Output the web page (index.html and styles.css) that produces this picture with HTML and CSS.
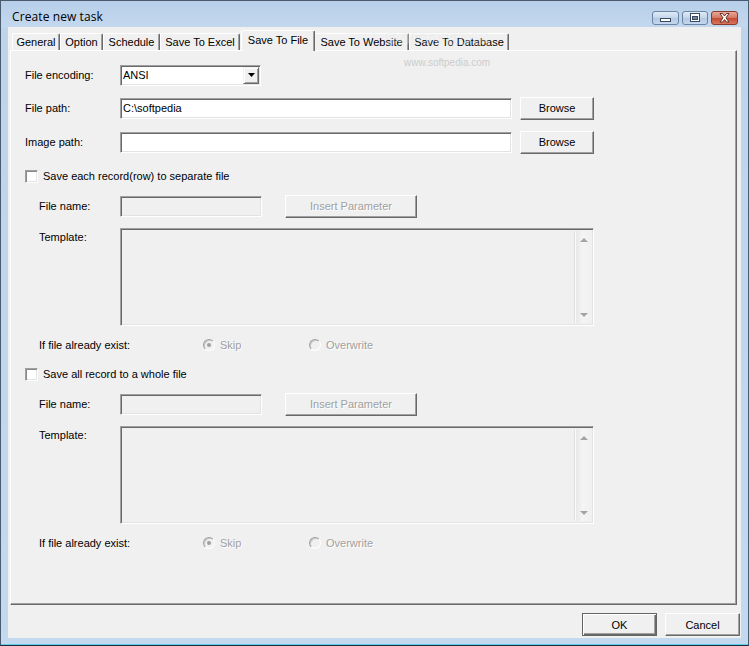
FILE: index.html
```html
<!DOCTYPE html>
<html>
<head>
<meta charset="utf-8">
<title>Create new task</title>
<link rel="stylesheet" href="styles.css">
</head>
<body>
<div class="window">
  <div class="titlebar">
    <span class="title">Create new task</span>
    <div class="caps">
      <span class="cap">
        <svg width="27" height="14" viewBox="0 0 27 14"><rect x="8.5" y="7.5" width="10" height="3" fill="#fff" stroke="#3a4a5e"/></svg>
      </span>
      <span class="cap">
        <svg width="26" height="14" viewBox="0 0 26 14"><rect x="8.5" y="2.5" width="9" height="8" fill="#fff" stroke="#3a4a5e"/><rect x="10.5" y="5.5" width="5" height="3" fill="#6f88a8" stroke="#3a4a5e"/></svg>
      </span>
      <span class="cap close">
        <svg width="27" height="14" viewBox="0 0 27 14"><path d="M9 2.5 L11.5 2.5 L13.5 5 L15.5 2.5 L18 2.5 L15 6.8 L18 11 L15.5 11 L13.5 8.6 L11.5 11 L9 11 L12 6.8 Z" fill="#fff" stroke="#5a2418" stroke-width="0.9"/></svg>
      </span>
    </div>
  </div>
  <div class="client">
    <div class="tabwrap">
      <div class="tabs">
        <span class="tab t-gen">General</span>
        <span class="tab t-opt">Option</span>
        <span class="tab t-sch">Schedule</span>
        <span class="tab t-xls">Save To Excel</span>
        <span class="tab sel t-file">Save To File</span>
        <span class="tab t-web">Save To Website</span>
        <span class="tab t-db">Save To Database</span>
      </div>
      <div class="panel">
        <div class="row r1">
          <span class="lbl">File encoding:</span>
          <div class="field select"><span class="val">ANSI</span><span class="drop"><svg width="7" height="4" viewBox="0 0 7 4"><path d="M0 0h7L3.5 4z" fill="#000"/></svg></span></div>
        </div>
        <div class="row r2">
          <span class="lbl">File path:</span>
          <div class="field path"><span class="val">C:\softpedia</span></div>
          <button class="btn browse">Browse</button>
        </div>
        <div class="row r3">
          <span class="lbl">Image path:</span>
          <div class="field path"></div>
          <button class="btn browse">Browse</button>
        </div>

        <div class="section s1">
          <div class="row chkrow">
            <span class="chk"></span><span>Save each record(row) to separate file</span>
          </div>
          <div class="row sub fname">
            <span class="lbl sublbl">File name:</span>
            <div class="field dis fn"></div>
            <button class="btn dbtn">Insert Parameter</button>
          </div>
          <div class="row sub tpl">
            <span class="lbl sublbl tlbl">Template:</span>
            <div class="field dis area">
              <div class="sb"><span class="arr up"></span><span class="arr down"></span></div>
            </div>
          </div>
          <div class="row sub rad">
            <span class="lbl radlbl">If file already exist:</span>
            <span class="ropt skip"><span class="radio on"></span><span class="dtext">Skip</span></span>
            <span class="ropt"><span class="radio"></span><span class="dtext">Overwrite</span></span>
          </div>
        </div>

        <div class="section s2">
          <div class="row chkrow">
            <span class="chk"></span><span>Save all record to a whole file</span>
          </div>
          <div class="row sub fname">
            <span class="lbl sublbl">File name:</span>
            <div class="field dis fn"></div>
            <button class="btn dbtn">Insert Parameter</button>
          </div>
          <div class="row sub tpl">
            <span class="lbl sublbl tlbl">Template:</span>
            <div class="field dis area">
              <div class="sb"><span class="arr up"></span><span class="arr down"></span></div>
            </div>
          </div>
          <div class="row sub rad">
            <span class="lbl radlbl">If file already exist:</span>
            <span class="ropt skip"><span class="radio on"></span><span class="dtext">Skip</span></span>
            <span class="ropt"><span class="radio"></span><span class="dtext">Overwrite</span></span>
          </div>
        </div>
      </div>
    </div>
    <div class="footer">
      <button class="btn fbtn def">OK</button>
      <button class="btn fbtn">Cancel</button>
    </div>
  </div>
  <div class="wm">
    <div class="wm-big">SOFTPEDIA</div>
    <div class="wm-small">www.softpedia.com</div>
  </div>
</div>
</body>
</html>
```
FILE: styles.css
```css
* { box-sizing: border-box; }
html, body { margin: 0; padding: 0; }
body {
  width: 749px; height: 646px; overflow: hidden; background: #fff;
  font-family: "Liberation Sans", Arial, sans-serif; font-size: 11px; color: #000;
}
.window {
  position: relative; width: 749px; height: 646px;
  border: 1px solid #4a5b70; border-bottom-color: #1d2b3a;
  background: linear-gradient(#b7cfe9 0, #c3d8ee 26px, #bdd4eb 27px, #c3d9ef 100%);
  box-shadow: inset 0 -1px 0 #5fd0ea;
  display: flex; flex-direction: column; padding: 0 7px 7px;
}
.titlebar { height: 26px; display: flex; align-items: flex-start; }
.title {
  font-family: "Open Sans", "Noto Sans", sans-serif; font-size: 12px;
  padding: 7px 0 0 4px; color: #000; letter-spacing: 0.1px;
}
.caps { margin-left: auto; margin-top: 10px; margin-right: 3px; display: flex; gap: 3px; }
.cap {
  width: 27px; height: 14px; border: 1px solid #6c84a3; border-radius: 3px;
  background: linear-gradient(#dfeaf6, #c2d5eb 50%, #b2c8e2 51%, #c5d8ee);
  display: flex; overflow: hidden;
}
.cap:nth-child(2) { width: 26px; }
.cap svg { margin: -1px; }
.cap.close {
  border-color: #8a3a2a;
  background: linear-gradient(#e9a99b, #d27560 50%, #c44a31 51%, #d8765e);
}
.client {
  flex: 1; background: #f0f0f0; display: flex; flex-direction: column;
}
.tabwrap { margin: 3px 4px 0 2px; display: flex; flex-direction: column; }
.tabs { height: 20px; display: flex; align-items: flex-end; padding-left: 2px; }
.tab {
  height: 17px; padding: 0; line-height: 16px; white-space: nowrap; text-align: center;
  border: 1px solid; border-bottom: 0; border-color: #fff #696969 #696969 #fff;
  box-shadow: inset -1px 0 #a0a0a0; border-radius: 2px 2px 0 0;
  background: #f0f0f0; flex: none;
}
.t-gen { width: 48px; }
.t-opt { width: 43px; }
.t-sch { width: 57px; }
.t-xls { width: 80px; }
.t-web { width: 95px; }
.t-db { width: 100px; }
.tab.sel {
  width: 74px; height: 21px; margin: 0 -1px -1px 1px; line-height: 18px;
  position: relative; z-index: 1;
}
.panel {
  height: 555px; border: 1px solid; border-color: #fff #696969 #696969 #fff;
  box-shadow: inset -1px -1px #a0a0a0;
  padding: 12px 0 0 14px; display: flex; flex-direction: column;
}
.row { height: 24px; display: flex; align-items: center; }
.lbl { width: 95px; flex: none; }
.r2 { margin-top: 9px; }
.r3 { margin-top: 10px; }
.field {
  height: 21px; border: 1px solid; border-color: #a0a0a0 #fff #fff #a0a0a0;
  box-shadow: inset 1px 1px #696969, inset -1px -1px #e3e3e3;
  background: #fff; display: flex; align-items: center; flex: none;
}
.val { padding-left: 2px; }
.select { width: 141px; }
.select .val { flex: 1; }
.drop {
  width: 16px; height: 17px; margin-right: 1px;
  border: 1px solid; border-color: #f0f0f0 #696969 #696969 #f0f0f0;
  box-shadow: inset 1px 1px #fff, inset -1px -1px #a0a0a0;
  background: #f0f0f0; display: flex; align-items: center; justify-content: center;
}
.path { width: 392px; }
.btn {
  height: 23px; border: 1px solid; border-color: #fff #696969 #696969 #fff;
  box-shadow: inset -1px -1px #a0a0a0; background: #f0f0f0;
  font-family: "Liberation Sans", Arial, sans-serif; font-size: 11px; color: #000;
  padding: 0; flex: none;
}
.browse { width: 74px; margin-left: 8px; }
.section { display: flex; flex-direction: column; }
.s1 { margin-top: 10px; }
.s2 { margin-top: 5px; }
.chk {
  width: 13px; height: 13px; margin-right: 5px; flex: none;
  border: 1px solid; border-color: #a0a0a0 #fff #fff #a0a0a0;
  box-shadow: inset 1px 1px #8a8a8a, inset -1px -1px #e3e3e3; background: #fff;
}
.sub { padding-left: 14px; }
.sublbl { width: 81px; }
.fname { margin-top: 6px; }
.dis { background: #f0f0f0; }
.fn { width: 142px; }
.dbtn { width: 132px; margin-left: 23px; color: #a0a0a0; text-shadow: 1px 1px 0 #fff; }
.tpl { margin-top: 10px; height: 98px; align-items: flex-start; }
.tlbl { padding-top: 3px; }
.area { width: 474px; height: 98px; justify-content: flex-end; align-items: stretch; padding: 2px 1px 2px 0; }
.sb {
  width: 17px; display: flex; flex-direction: column; justify-content: space-between;
  background: linear-gradient(90deg, #e8e8e8, #f4f4f4 40%, #f0f0f0);
  border-left: 1px solid #fafafa; box-shadow: -1px 0 #e0e0e0;
}
.arr { height: 17px; display: flex; align-items: center; justify-content: center; }
.arr::before { content: ""; width: 0; height: 0; border-left: 4px solid transparent; border-right: 4px solid transparent; }
.arr.up::before { border-bottom: 4px solid #a4a4a4; }
.arr.down::before { border-top: 4px solid #a4a4a4; }
.rad { margin-top: 7px; }
.radlbl { width: 164px; }
.ropt { display: flex; align-items: center; gap: 5px; }
.skip { width: 106px; }
.radio {
  width: 12px; height: 12px; border-radius: 50%; flex: none;
  border: 1px solid; border-color: #a0a0a0 #fff #fff #a0a0a0;
  box-shadow: inset 1px 1px #c8c8c8; background: #f0f0f0;
  display: flex; align-items: center; justify-content: center;
}
.radio.on::after { content: ""; width: 4px; height: 4px; border-radius: 50%; background: #a0a0a0; }
.dtext { color: #a0a0a0; text-shadow: 1px 1px 0 #fff; }
.footer { flex: 1; display: flex; justify-content: flex-end; gap: 8px; padding: 8px 1px 0 0; }
.fbtn { width: 75px; }
.def {
  border: 1px solid #646464;
  box-shadow: inset 1px 1px #fff, inset -1px -1px #696969, inset -2px -2px #a0a0a0;
}
.wm { position: absolute; left: 384px; top: 30px; pointer-events: none; z-index: 2; }
.wm-big {
  font-family: "DejaVu Sans", sans-serif; font-size: 16px; font-weight: bold; letter-spacing: 0.5px;
  color: rgba(255,255,255,0.25); -webkit-text-stroke: 0.5px rgba(200,200,200,0.3); line-height: 18px;
}
.wm-small {
  font-family: "Liberation Sans", sans-serif; font-size: 10px; color: #cdcdcd;
  margin: 9px 0 0 19px; line-height: 10px;
}
```
